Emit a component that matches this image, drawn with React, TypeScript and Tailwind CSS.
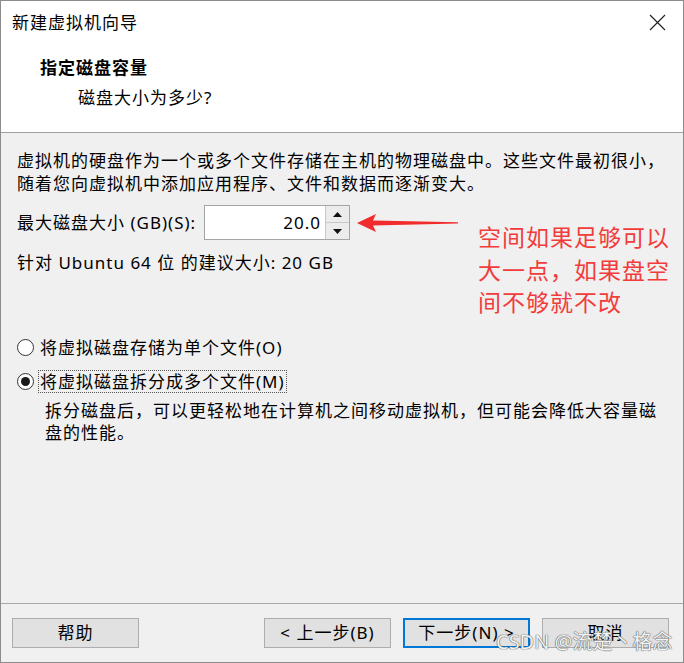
import React from "react";

const FONT = { fontFamily: '"Noto Sans", "Noto Sans CJK SC", sans-serif' };

const Radio = ({ checked }: { checked?: boolean }) => (
  <span className="flex h-[17px] w-[17px] shrink-0 items-center justify-center rounded-full border border-[#333333] bg-white">
    {checked && <span className="h-[9px] w-[9px] rounded-full bg-[#1a1a1a]" />}
  </span>
);

const Button = ({ label, primary }: { label: string; primary?: boolean }) => (
  <button
    className={
      primary
        ? "h-[30px] w-[127px] border-2 border-[#0078d7] bg-[#e1e1e1] text-[17px] leading-[26px] tracking-[1px] text-black"
        : "h-[30px] w-[127px] border border-[#adadad] bg-[#e1e1e1] text-[17px] leading-[28px] tracking-[1px] text-black"
    }
  >
    {label}
  </button>
);

export default function App() {
  return (
    <div
      style={FONT}
      className="relative flex h-[663px] w-[684px] flex-col border border-[#8c8c8c] bg-[#f0f0f0] text-[17px] tracking-[1px] text-black"
    >
      {/* header */}
      <div className="relative h-[132px] shrink-0 border-b border-[#a0a0a0] bg-white pl-[11px] pt-[10px]">
        <div className="leading-[23px]">新建虚拟机向导</div>
        <svg className="absolute right-[17px] top-[13px]" width="17" height="17" viewBox="0 0 17 17">
          <path d="M1 1 L16 16 M16 1 L1 16" stroke="#222" strokeWidth="1.2" fill="none" />
        </svg>
        <div className="mt-[22px] pl-[28px] font-bold leading-[23px]">指定磁盘容量</div>
        <div className="mt-[7px] pl-[66px] leading-[23px]">磁盘大小为多少?</div>
      </div>

      {/* body */}
      <div className="relative flex-1 pl-[16px] pt-[16px]">
        <div className="leading-[23px]">
          <div>虚拟机的硬盘作为一个或多个文件存储在主机的物理磁盘中。这些文件最初很小，</div>
          <div>随着您向虚拟机中添加应用程序、文件和数据而逐渐变大。</div>
        </div>

        <div className="mt-[10px] flex items-center">
          <span className="w-[187px] leading-[23px]">最大磁盘大小 (GB)(S):</span>
          <div className="flex h-[35px] w-[146px] border border-[#a5a5a5]">
            <div className="flex-1 bg-white pr-[4px] text-right leading-[33px]">20.0</div>
            <div className="flex w-[24px] flex-col border-l border-[#c8c8c8]">
              <div className="flex flex-1 items-center justify-center border-b border-[#c8c8c8] bg-[#ececec]">
                <svg width="9" height="5" viewBox="0 0 9 5"><path d="M0 5 L4.5 0 L9 5 Z" fill="#111" /></svg>
              </div>
              <div className="flex flex-1 items-center justify-center bg-[#ececec]">
                <svg width="9" height="5" viewBox="0 0 9 5"><path d="M0 0 L4.5 5 L9 0 Z" fill="#111" /></svg>
              </div>
            </div>
          </div>
          <svg className="ml-[7px]" width="101" height="20" viewBox="0 0 101 20">
            <path d="M0 10 L19 1 L16 7.5 L101 9.3 L101 10.5 L16 12.5 L19 19 Z" fill="#f22c2c" />
          </svg>
        </div>

        <div className="mt-[11px] leading-[23px]">针对 Ubuntu 64 位 的建议大小: 20 GB</div>

        <label className="mt-[62px] flex items-center gap-[6px] leading-[23px]">
          <Radio />
          <span>将虚拟磁盘存储为单个文件(O)</span>
        </label>
        <label className="mt-[11px] flex items-center gap-[4px]">
          <Radio checked />
          <span className="border border-dotted border-[#555] px-[1px] leading-[21px]">将虚拟磁盘拆分成多个文件(M)</span>
        </label>
        <div className="mt-[7px] pl-[28px] leading-[22px]">
          <div>拆分磁盘后，可以更轻松地在计算机之间移动虚拟机，但可能会降低大容量磁</div>
          <div>盘的性能。</div>
        </div>

        {/* annotation */}
        <div className="absolute left-[477px] top-[88px] text-[23px] leading-[32.5px] text-[#f23c3c]">
          <div>空间如果足够可以</div>
          <div>大一点，如果盘空</div>
          <div>间不够就不改</div>
        </div>
      </div>

      {/* footer */}
      <div className="flex h-[59px] shrink-0 items-start gap-[12px] border-t border-[#a8a8a8] pl-[11px] pr-[14px] pt-[14px]">
        <Button label="帮助" />
        <div className="flex-1" />
        <Button label="< 上一步(B)" />
        <Button label="下一步(N) >" primary />
        <Button label="取消" />
      </div>

      {/* watermark */}
      <div className="pointer-events-none absolute left-[495px] top-[628px] text-[20px] leading-[26px] tracking-[0px] text-[#f3f3f3] [text-shadow:0_0_1px_#444,0_0_1px_#444]">
        CSDN @流楚丶格念
      </div>
    </div>
  );
}
